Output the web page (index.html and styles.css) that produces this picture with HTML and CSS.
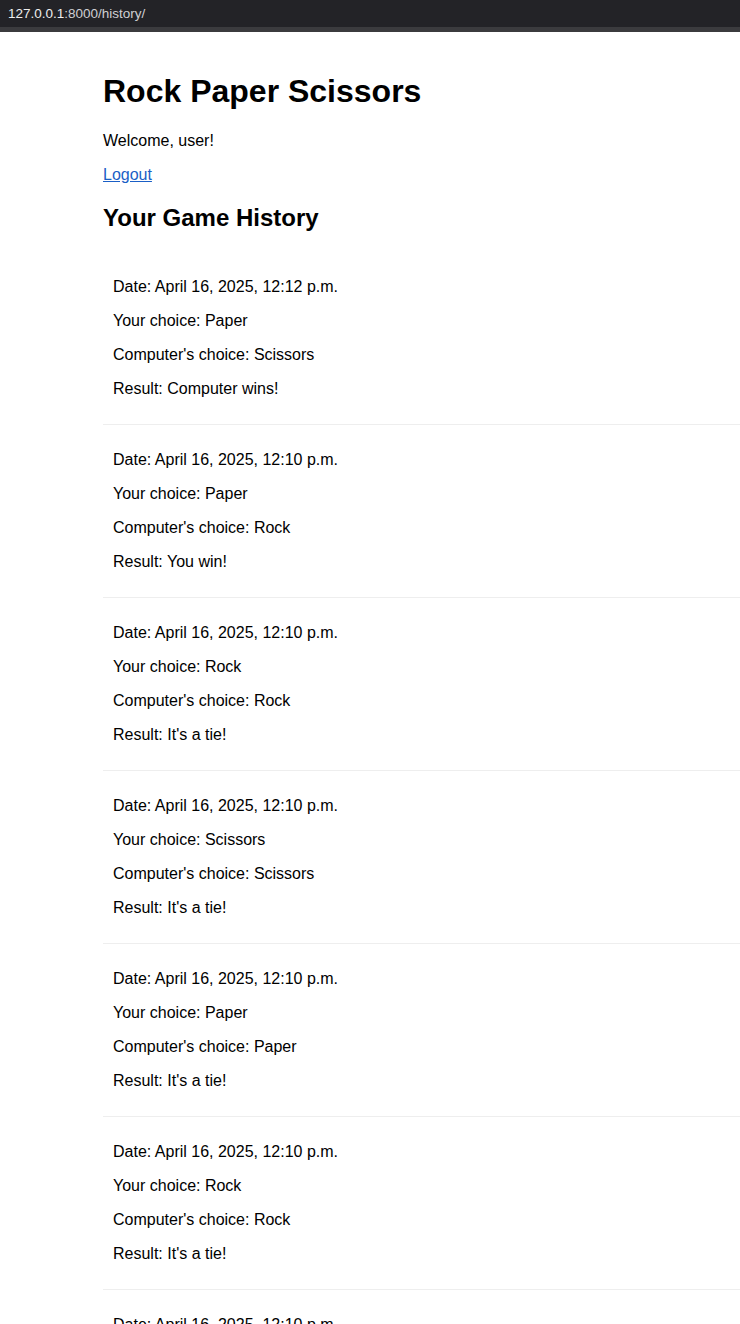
FILE: index.html
```html
<!DOCTYPE html>
<html lang="en">
<head>
<meta charset="utf-8">
<title>Game History</title>
<link rel="stylesheet" href="styles.css">
</head>
<body>
<div class="urlbar"><span class="host">127.0.0.1</span><span class="path">:8000/history/</span></div>
<div class="urlstrip"></div>
<main class="page">
  <h1>Rock Paper Scissors</h1>
  <p>Welcome, user!</p>
  <p><a href="#">Logout</a></p>
  <h2>Your Game History</h2>
  <ul class="history">
    <li class="game">
      <p>Date: April 16, 2025, 12:12 p.m.</p>
      <p>Your choice: Paper</p>
      <p>Computer's choice: Scissors</p>
      <p>Result: Computer wins!</p>
    </li>
    <li class="game">
      <p>Date: April 16, 2025, 12:10 p.m.</p>
      <p>Your choice: Paper</p>
      <p>Computer's choice: Rock</p>
      <p>Result: You win!</p>
    </li>
    <li class="game">
      <p>Date: April 16, 2025, 12:10 p.m.</p>
      <p>Your choice: Rock</p>
      <p>Computer's choice: Rock</p>
      <p>Result: It's a tie!</p>
    </li>
    <li class="game">
      <p>Date: April 16, 2025, 12:10 p.m.</p>
      <p>Your choice: Scissors</p>
      <p>Computer's choice: Scissors</p>
      <p>Result: It's a tie!</p>
    </li>
    <li class="game">
      <p>Date: April 16, 2025, 12:10 p.m.</p>
      <p>Your choice: Paper</p>
      <p>Computer's choice: Paper</p>
      <p>Result: It's a tie!</p>
    </li>
    <li class="game">
      <p>Date: April 16, 2025, 12:10 p.m.</p>
      <p>Your choice: Rock</p>
      <p>Computer's choice: Rock</p>
      <p>Result: It's a tie!</p>
    </li>
    <li class="game">
      <p>Date: April 16, 2025, 12:10 p.m.</p>
      <p>Your choice: Rock</p>
      <p>Computer's choice: Rock</p>
      <p>Result: It's a tie!</p>
    </li>
  </ul>
</main>
</body>
</html>
```

FILE: styles.css
```css
html, body {
  margin: 0;
  padding: 0;
  background: #ffffff;
  overflow: hidden;
}

body {
  font-family: "Liberation Sans", Arial, sans-serif;
  color: #000000;
}

.urlbar {
  height: 27px;
  background: #232327;
  display: flex;
  align-items: center;
  padding-left: 8px;
  font-family: "Liberation Sans", Arial, sans-serif;
  font-size: 13.5px;
}

.urlbar .host {
  color: #eeeeee;
}

.urlbar .path {
  color: #cfcfd3;
}

.urlstrip {
  height: 5px;
  background: #3b3b3e;
}

.page {
  padding: 20px 0 0 103px;
}

h1 {
  font-size: 32px;
  margin: 21.44px 0;
}

h2 {
  font-size: 24px;
  margin: 19.92px 0;
}

p {
  font-size: 16px;
  margin: 16px 0;
}

a {
  color: #1a5fc6;
}

.history {
  list-style: none;
  margin: 0;
  padding: 0;
}

.game {
  padding: 10px;
  border-bottom: 1px solid #eeeeee;
}
```
